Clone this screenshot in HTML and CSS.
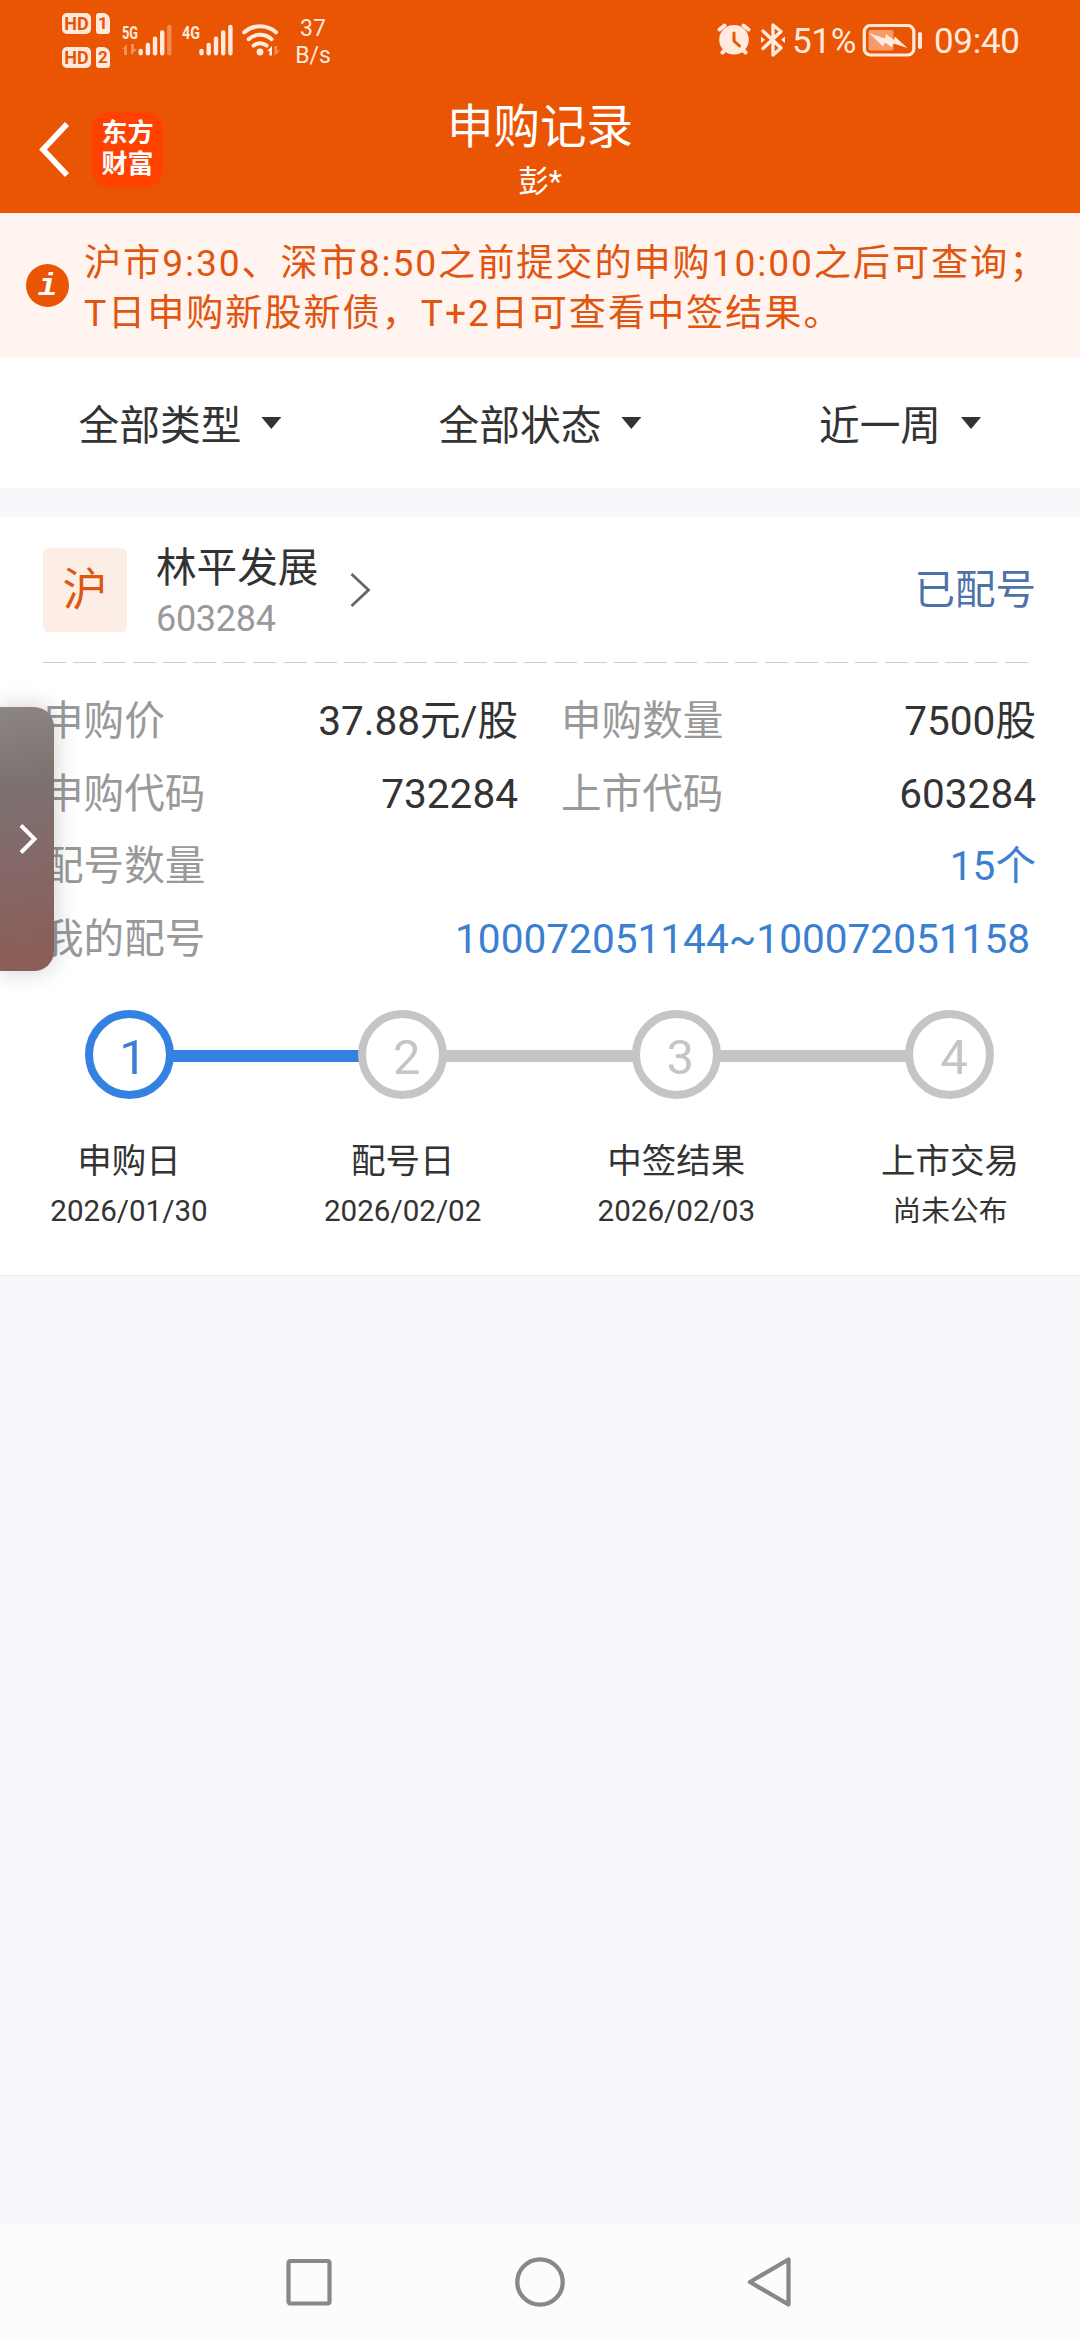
FILE: index.html
```html
<!DOCTYPE html>
<html lang="zh-CN">
<head>
<meta charset="utf-8">
<title>申购记录</title>
<link rel="stylesheet" href="styles.css">
</head>
<body>
<div class="screen">
  <header class="top">
    <div class="status">
      <div class="sims">
        <div class="sim"><span class="hd">HD</span><span class="slot">1</span></div>
        <div class="sim"><span class="hd">HD</span><span class="slot">2</span></div>
      </div>
      <svg class="sig5" width="52" height="36" viewBox="120 22 52 36">
        <text x="122" y="38.5" class="net" textLength="16" lengthAdjust="spacingAndGlyphs">5G</text>
        <g opacity=".4"><path d="M122 49l5-5v11h-3v-6zM131 44h3v5h3l-6 6z" fill="#ffeadd"/></g>
        <g stroke="#ffeadd" stroke-width="4.4" stroke-linecap="round"><path d="M140.7 51v2.3M147.9 45v8.3M155 38.7v14.6M162.2 32.4v20.9"/><path d="M169.3 27v26.3" opacity=".35"/></g>
      </svg>
      <svg class="sig4" width="52" height="36" viewBox="181 22 52 36">
        <text x="182" y="38.5" class="net" textLength="18" lengthAdjust="spacingAndGlyphs">4G</text>
        <path d="M201.5 51v2.3M208.7 45v8.3M216 38.7v14.6M223.2 32.4v20.9M230.4 27v26.3" stroke="#ffeadd" stroke-width="4.4" stroke-linecap="round"/>
      </svg>
      <svg class="wifi" width="40" height="36" viewBox="241 22 40 36">
        <g fill="none" stroke="#ffeadd" stroke-width="4" stroke-linecap="round"><path d="M244.2 32.3a24 24 0 0 1 31.8 0M248.6 39.2a17 17 0 0 1 23 0M253.6 45.6a10 10 0 0 1 13 0"/></g>
        <circle cx="260" cy="52" r="3.4" fill="#ffeadd"/>
        <path d="M267 51l5-5v9.500h-2.600v-4.500z" fill="#ffeadd"/><path d="M274.500 46h2.600v4.500h3l-5.600 5z" fill="#ffeadd" opacity=".4"/>
      </svg>
      <div class="speed"><span>37</span><span>B/s</span></div>
      <svg class="alarm" width="34" height="34" viewBox="716 24 34 34">
        <circle cx="733" cy="40.800" r="14.800" fill="#ffeadd"/>
        <path d="M718.500 30.500l5-4M747.500 30.500l-5-4M721.500 53.500l3-3M744.500 53.500l-3-3" stroke="#ffeadd" stroke-width="4" stroke-linecap="round"/>
        <path d="M733 34v8l5.500 5" fill="none" stroke="#ea5504" stroke-width="3" stroke-linecap="round" stroke-linejoin="round"/>
      </svg>
      <svg class="bt" width="26" height="36" viewBox="759 22 26 36">
        <path d="M762 31l18 17-8 7V25l8 6.500-18 17" fill="none" stroke="#ffeadd" stroke-width="3.400" stroke-linecap="round" stroke-linejoin="round"/>
        <path d="M760 36.500l4 3.300-4 3.300zM784 36.500l-4 3.300 4 3.300z" fill="#ffeadd"/>
      </svg>
      <span class="pct">51%</span>
      <svg class="batt" width="60" height="36" viewBox="861 22 60 36">
        <rect x="863.300" y="25.500" width="49.500" height="29.500" rx="6" fill="none" stroke="#ffeadd" stroke-width="3.200"/>
        <rect x="867.500" y="30" width="25" height="20.500" rx="2" fill="#f69a6a"/>
        <path d="M868 33l16 5.500 1-4.500 8 6 .8-3.500L906.500 48l-14-4.500-1.500 4-7-5-2 4z" fill="#ffeadd"/>
        <path d="M919 34v13" stroke="#ffeadd" stroke-width="4" stroke-linecap="round"/>
      </svg>
      <span class="clock">09:40</span>
    </div>
    <div class="titlebar">
      <div class="left">
        <svg class="back" width="34" height="60" viewBox="0 0 34 60"><path d="M30 5L6 30.500 30 56" fill="none" stroke="#fff" stroke-width="5.600"/></svg>
        <div class="logo"><span>东方</span><span>财富</span></div>
      </div>
      <div class="heading"><h1>申购记录</h1><p>彭*</p></div>
    </div>
  </header>

  <section class="notice">
    <span class="info">i</span>
    <p>沪市9:30、深市8:50之前提交的申购10:00之后可查询；<br>T日申购新股新债，T+2日可查看中签结果。</p>
  </section>

  <nav class="filters">
    <div class="filter">全部类型<i class="caret"></i></div>
    <div class="filter">全部状态<i class="caret"></i></div>
    <div class="filter">近一周<i class="caret"></i></div>
  </nav>

  <main class="card">
    <div class="stock">
      <span class="market">沪</span>
      <div class="names"><strong>林平发展</strong><span>603284</span></div>
      <svg class="more" width="24" height="38" viewBox="0 0 24 38"><path d="M2.500 3l17 16-17 16" fill="none" stroke="#666" stroke-width="2.800"/></svg>
      <span class="state">已配号</span>
    </div>
    <div class="dash"></div>
    <div class="details">
      <div class="row"><div class="pair"><span class="k">申购价</span><span class="v">37.88元/股</span></div><div class="pair"><span class="k">申购数量</span><span class="v">7500股</span></div></div>
      <div class="row"><div class="pair"><span class="k">申购代码</span><span class="v">732284</span></div><div class="pair"><span class="k">上市代码</span><span class="v">603284</span></div></div>
      <div class="row"><span class="k">配号数量</span><span class="v link">15个</span></div>
      <div class="row"><span class="k">我的配号</span><span class="v link range">100072051144~100072051158</span></div>
    </div>
    <div class="steps">
      <div class="step done"><span class="dot">1</span><b>申购日</b><em>2026/01/30</em></div>
      <div class="step"><span class="dot">2</span><b>配号日</b><em>2026/02/02</em></div>
      <div class="step"><span class="dot">3</span><b>中签结果</b><em>2026/02/03</em></div>
      <div class="step"><span class="dot">4</span><b>上市交易</b><em class="cn">尚未公布</em></div>
    </div>
  </main>

  <footer class="sysnav">
    <svg width="50" height="54" viewBox="0 0 50 54"><rect x="4.500" y="6" width="41" height="42.500" rx="2" fill="none" stroke="#888" stroke-width="4.200"/></svg>
    <svg width="54" height="54" viewBox="0 0 54 54"><circle cx="27" cy="27" r="22.700" fill="none" stroke="#888" stroke-width="4.300"/></svg>
    <svg width="50" height="54" viewBox="0 0 50 54"><path d="M42.500 4.500v45L4 27z" fill="none" stroke="#888" stroke-width="4.300" stroke-linejoin="round"/></svg>
  </footer>

  <aside class="drawer"><svg width="20" height="34" viewBox="0 0 20 34"><path d="M2 3.500L15.500 17 2 30.500" fill="none" stroke="#fff" stroke-width="4"/></svg></aside>
</div>
</body>
</html>
```

FILE: styles.css
```css
* { box-sizing: border-box; }
body, h1, p { margin: 0; }
body { background: #f6f8fb; font-family: Roboto, "Noto Sans CJK SC", sans-serif; color: #333; }
svg { display: block; flex: none; }
.screen { position: relative; width: 1080px; height: 2340px; overflow: hidden; display: flex; flex-direction: column; }

/* status bar */
.top { height: 213px; background: #ea5504; color: #fff; flex: none; }
.status { height: 80px; display: flex; align-items: center; padding-left: 62px; color: #ffeadd; }
.sims { display: flex; flex-direction: column; gap: 13px; width: 58px; }
.sim { display: flex; gap: 5px; }
.hd, .slot { height: 21px; background: #ffeadd; color: #ea5504; font: 700 18px/21px Roboto, sans-serif; text-align: center; border-radius: 5px; }
.hd { width: 29px; }
.slot { width: 14px; font-size: 17px; border-radius: 3px 7px 3px 3px; }
.net { font: 700 19px Roboto, sans-serif; fill: #ffeadd; }
.sig4 { margin-left: 9px; }
.wifi { margin-left: 8px; }
.speed { display: flex; flex-direction: column; width: 50px; margin-left: 7px; text-align: center; font-size: 23px; line-height: 27px; padding-top: 3px; }
.alarm { margin-left: 379px; }
.bt { margin-left: 9px; }
.pct { width: 70px; margin-left: 6px; font-size: 35px; white-space: nowrap; letter-spacing: -.3px; padding-top: 3px; }
.clock { margin-left: 12px; font-size: 35px; padding-top: 3px; letter-spacing: -.3px; }

/* title bar */
.titlebar { height: 133px; display: grid; grid-template-columns: 1fr auto 1fr; }
.left { display: flex; align-items: flex-start; padding: 32px 0 0 37px; }
.back { margin-top: 7px; }
.logo { width: 71px; height: 75px; margin-left: 21px; padding-bottom: 2px; border-radius: 16px; background: #ff4200; display: flex; flex-direction: column; justify-content: center; text-align: center; font: 700 26px/31px Roboto, "Noto Sans CJK SC", sans-serif; }
.heading { text-align: center; padding-top: 16px; }
.heading h1 { font-size: 46.5px; line-height: 62px; font-weight: 400; }
.heading p { font-size: 30.5px; line-height: 48px; }

/* notice */
.notice { height: 145px; background: #fff4ef; display: flex; align-items: center; padding-left: 26px; flex: none; color: #e05610; }
.info { width: 43px; height: 43px; border-radius: 50%; background: #ea5504; color: #fff; text-align: center; font: italic 700 32px/45px "Liberation Mono", monospace; }
.notice p { margin-left: 15px; padding-top: 5px; font-size: 37.2px; line-height: 50px; letter-spacing: 1.9px; white-space: nowrap; }

/* filters */
.filters { height: 130px; background: #fff; display: grid; grid-template-columns: repeat(3, 1fr); flex: none; }
.filter { display: flex; align-items: center; justify-content: center; font-size: 40.7px; line-height: 50px; padding-top: 5px; }
.caret { width: 20px; height: 12px; margin: -5px 0 0 20px; background: #333; clip-path: polygon(0 0, 100% 0, 50% 100%); }

/* subscription card */
.card { margin-top: 29px; height: 759px; background: #fff; border-bottom: 1px solid #ececec; padding: 31px 44px 0 43px; flex: none; }
.stock { display: flex; align-items: center; height: 84px; }
.market { width: 84px; height: 84px; border-radius: 6px; background: #fceee5; color: #dd5712; font-size: 45px; line-height: 85px; text-align: center; }
.names { margin-left: 29px; display: flex; flex-direction: column; padding-top: 7px; }
.names strong { font-weight: 400; font-size: 40.6px; line-height: 44px; }
.names span { font-size: 36px; line-height: 58px; letter-spacing: -.3px; color: #999; margin-bottom: -7px; }
.more { margin-left: 31px; }
.state { margin-left: auto; font-size: 40.5px; line-height: 50px; color: #4c72a8; }
.dash { height: 1px; width: 986px; margin-top: 30px; background: repeating-linear-gradient(90deg, #ccc 0 23px, transparent 23px 30.070px); }
.details { padding-top: 22px; font-size: 40.6px; line-height: 72.500px; }
.row { display: flex; justify-content: space-between; height: 72.500px; }
.pair { display: flex; justify-content: space-between; width: 475px; }
.k { color: #999; }
.link { color: #3b80d0; }
.range { padding-right: 6px; }

/* progress */
.steps { display: flex; justify-content: space-between; margin: 35px -4px 0; }
.step { width: 180px; display: flex; flex-direction: column; align-items: center; position: relative; }
.dot { width: 89px; height: 89px; border: 8.500px solid #c5c5c5; border-radius: 50%; background: #fff; color: #c5c5c5; font-size: 49px; line-height: 79px; text-align: center; padding-left: 8px; z-index: 1; }
.step:not(:last-child)::after { content: ""; position: absolute; left: 90px; top: 40px; width: 274px; height: 12px; background: #c5c5c5; }
.step.done::after { background: #3481e2; }
.done .dot { border-color: #3481e2; color: #3b80d0; }
.step b { font-weight: 400; font-size: 34.500px; line-height: 50px; margin-top: 37px; }
.step em { font-style: normal; font-size: 29.6px; line-height: 50px; }
.step em.cn { font-size: 28.700px; }

/* system navigation */
.sysnav { margin-top: auto; height: 116px; background: #fcfcfc; display: flex; justify-content: center; align-items: center; gap: 179px; flex: none; }

/* edge drawer handle over the card */
.drawer { position: absolute; left: 0; top: 707px; width: 54px; height: 264px; border-radius: 0 20px 20px 0; background: linear-gradient(170deg, #8e8684 0%, #7b716f 30%, #84696a 55%, #87635f 75%, #8b5d55 100%); box-shadow: 0 0 24px rgba(0, 0, 0, .2); display: flex; align-items: center; padding-left: 19px; }
```
